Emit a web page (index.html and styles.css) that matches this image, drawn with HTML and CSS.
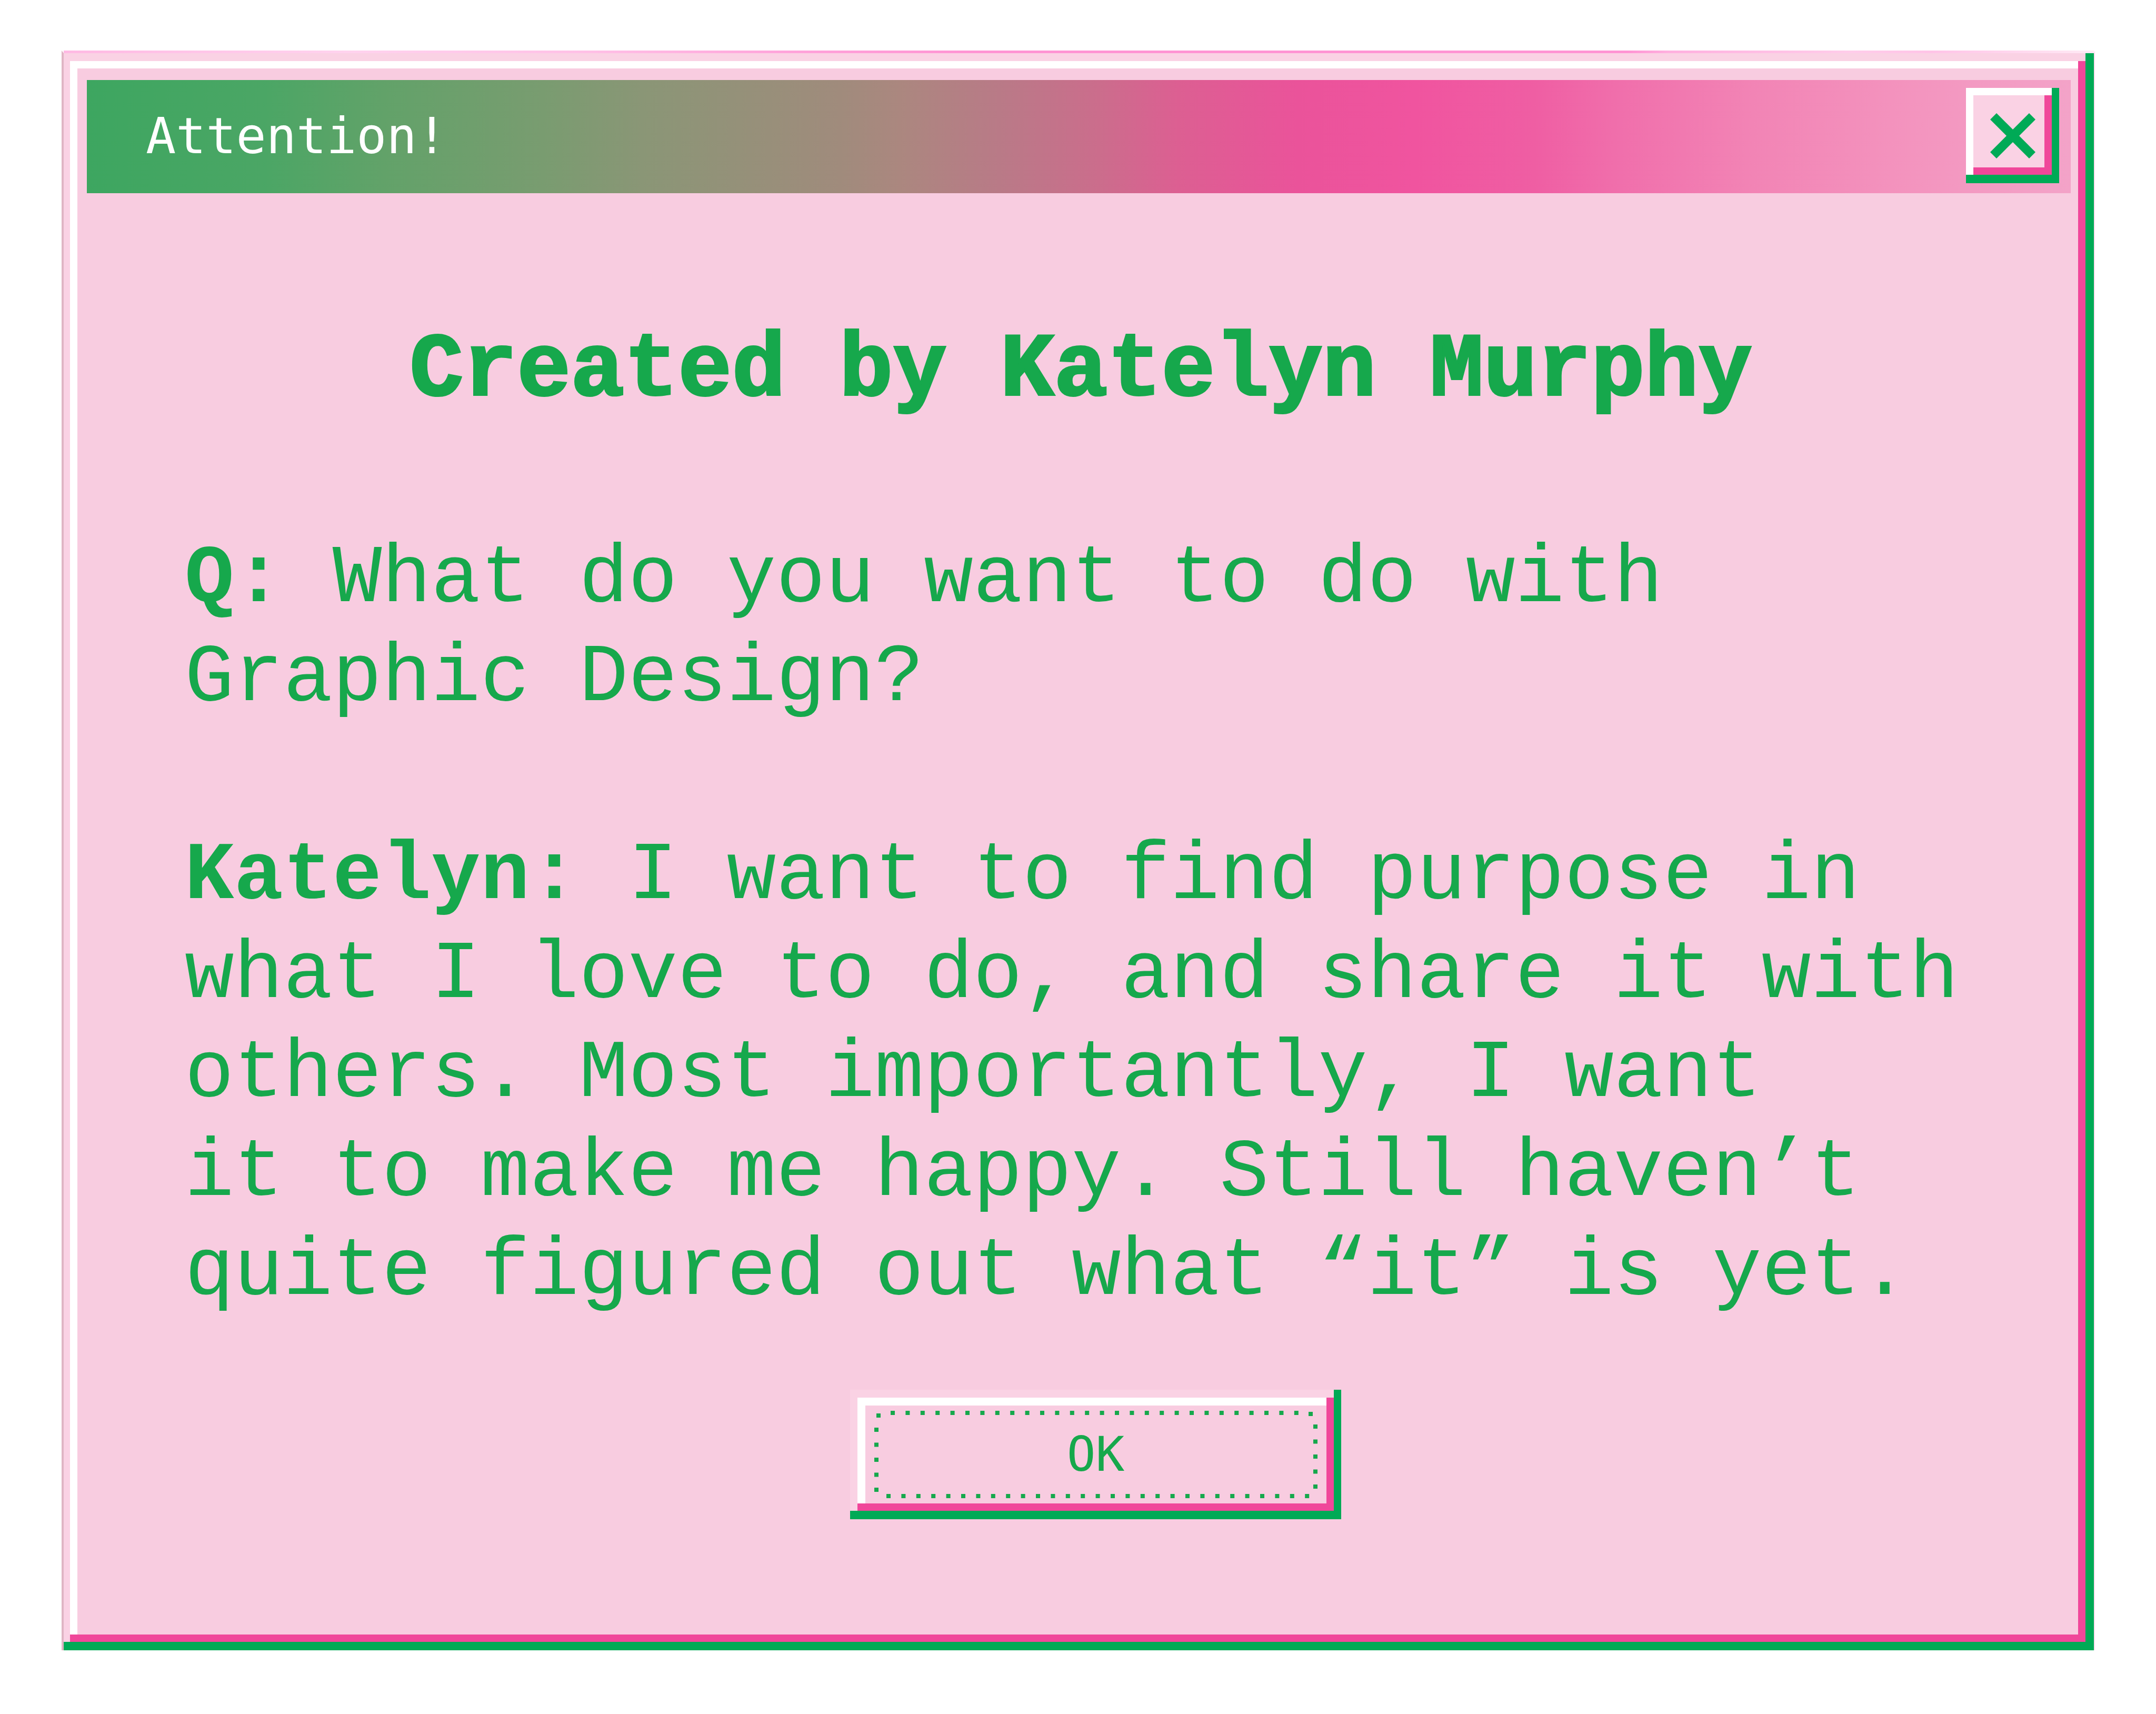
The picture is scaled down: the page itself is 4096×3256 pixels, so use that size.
FILE: index.html
```html
<!DOCTYPE html>
<html lang="en">
<head>
<meta charset="utf-8">
<title>Attention!</title>
<link rel="stylesheet" href="styles.css">
</head>
<body>
<main class="window" role="dialog" aria-labelledby="window-title">
  <header class="titlebar">
    <span class="titlebar-text" id="window-title">Attention!</span>
    <button class="close" type="button" aria-label="Close">
      <svg class="close-icon" viewBox="0 0 86 86" aria-hidden="true"><path d="M6 6 80 80M80 6 6 80"/></svg>
    </button>
  </header>
  <section class="content">
    <h1 class="heading">Created by Katelyn Murphy</h1>
    <p class="text"><strong>Q:</strong> What do you want to do with Graphic Design?</p>
    <p class="text"><strong>Katelyn:</strong> I want to find purpose in what I love to do, and share it with others. Most importantly, I want<br>it to make me happy. Still haven’t quite figured out what “it” is yet.</p>
    <button class="ok" type="button">
      <svg class="ok-dots" viewBox="0 0 842 166" aria-hidden="true">
        <path stroke-dasharray="8 20.4" d="M31 4H806M23 162H828"/>
        <path stroke-dasharray="8 20.5" d="M4 32V156M838 26V150"/>
        <path d="M4 9h8M825 6h8"/>
      </svg>
      <span>OK</span>
    </button>
  </section>
</main>
</body>
</html>
```

FILE: styles.css
```css
:root {
  --pink: #f8cce0;
  --pink-light: #fad2e4;
  --hot: #f0479a;
  --green: #00aa56;
  --ink: #16a84c;
}

* {
  box-sizing: border-box;
}

body {
  margin: 0;
  padding: 96px 116px 120px 117px;
  background: #fff;
}

.window {
  padding: 51px 44px 249px;
  border-top: 5px solid transparent;
  border-left: 4px solid #dfb5c4;
  border-right: 2px solid #ffdcf0;
  background:
    linear-gradient(var(--pink), var(--pink)) padding-box,
    linear-gradient(90deg, #ffb9e3 0%, #ffd3ee 14%, #ffc0e6 26%, #ffa3da 36%, #ff94d3 45%, #ff94d3 77%, #ffb0df 79%, #ffcdea 88%, #ffc4e7 92%, #ffeaf5 100%) border-box;
  box-shadow:
    inset -16px -16px var(--green),
    inset 12px 15px var(--pink-light),
    inset -30px -30px var(--hot),
    inset 26px 29px #fff;
}

.titlebar {
  display: flex;
  align-items: center;
  justify-content: space-between;
  height: 215px;
  padding: 0 22px 4px 112px;
  background: linear-gradient(90deg, #3da660 0%, #4ba665 9%, #62a269 15%, #799c70 23%, #8a9676 28%, #a08b7c 38%, #ab877f 41%, #b97a87 46%, #cb6d8c 51%, #dc5f92 55%, #ea539a 61%, #f0549f 67%, #ef5ea3 73%, #f06eab 77%, #f284b5 84%, #f392bd 91%, #f3a3c8 100%);
}

.titlebar-text {
  color: #fff;
  font: 95px/120px "DejaVu Sans Mono", monospace;
}

.close {
  display: flex;
  align-items: center;
  justify-content: center;
  width: 177px;
  height: 181px;
  padding: 0;
  border: 0;
  background: var(--pink-light);
  box-shadow:
    inset -14px -16px var(--green),
    inset 14px 14px #fff,
    inset -28px -30px var(--hot);
}

.close-icon {
  width: 86px;
  height: 86px;
  fill: none;
  stroke: var(--green);
  stroke-width: 17px;
}

.content {
  display: flex;
  flex-direction: column;
  padding: 234px 178px 0 186px;
  color: var(--ink);
  font-family: "Liberation Mono", monospace;
}

.heading {
  margin: 0 0 198px;
  font-size: 170px;
  line-height: 208px;
  text-align: center;
  -webkit-text-stroke: 4px var(--ink);
}

.text {
  margin: 0 0 188px;
  font-size: 156px;
  line-height: 188px;
}

.text:last-of-type {
  margin-bottom: 129px;
}

.ok {
  position: relative;
  display: flex;
  align-items: center;
  justify-content: center;
  align-self: center;
  width: 933px;
  height: 246px;
  margin-left: 56px;
  padding: 0;
  border: 0;
  background: var(--pink);
  color: var(--ink);
  font: 91px/120px "DejaVu Sans Mono", monospace;
  box-shadow:
    inset -14px -16px var(--green),
    inset 14px 15px var(--pink-light),
    inset -28px -30px var(--hot),
    inset 29px 30px #fff;
}

.ok-dots {
  position: absolute;
  top: 40px;
  left: 46px;
  width: 842px;
  height: 166px;
  fill: none;
  stroke: var(--ink);
  stroke-width: 8px;
}
```
